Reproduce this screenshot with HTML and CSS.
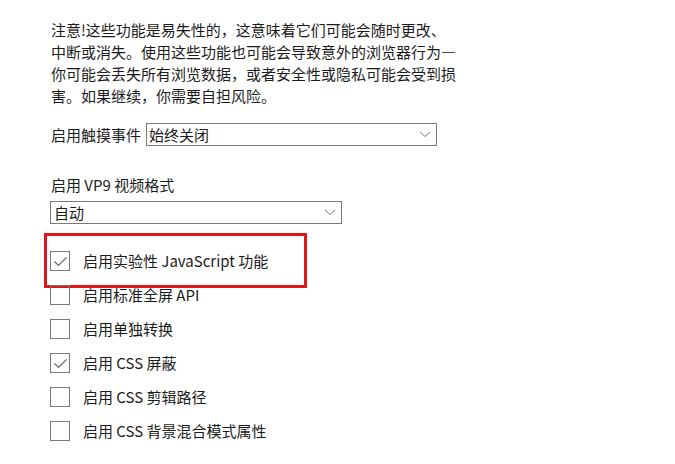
FILE: index.html
```html
<!DOCTYPE html>
<html lang="zh-CN">
<head>
<meta charset="utf-8">
<link rel="stylesheet" href="styles.css">
</head>
<body>
<div class="page">
  <p class="warning">注意!这些功能是易失性的，这意味着它们可能会随时更改、<br>中断或消失。使用这些功能也可能会导致意外的浏览器行为—<br>你可能会丢失所有浏览数据，或者安全性或隐私可能会受到损<br>害。如果继续，你需要自担风险。</p>

  <div class="inline-field">
    <span class="label">启用触摸事件</span>
    <div class="select select-wide">
      <span>始终关闭</span>
      <svg class="chev" width="12" height="7" viewBox="0 0 12 7"><path d="M1 1 L6 5.5 L11 1" fill="none" stroke="#777" stroke-width="1"/></svg>
    </div>
  </div>

  <div class="stack-field">
    <div class="label">启用 VP9 视频格式</div>
    <div class="select select-mid">
      <span>自动</span>
      <svg class="chev" width="12" height="7" viewBox="0 0 12 7"><path d="M1 1 L6 5.5 L11 1" fill="none" stroke="#777" stroke-width="1"/></svg>
    </div>
  </div>

  <div class="checks">
    <div class="check-row">
      <span class="box"><svg width="18" height="18" viewBox="0 0 18 18"><path d="M3.5 9.5 L7.5 13.5 L15.5 5.5" fill="none" stroke="#6b6b6b" stroke-width="1.2"/></svg></span>
      <span class="check-label">启用实验性 JavaScript 功能</span>
      <div class="highlight"></div>
    </div>
    <div class="check-row">
      <span class="box"></span>
      <span class="check-label">启用标准全屏 API</span>
    </div>
    <div class="check-row">
      <span class="box"></span>
      <span class="check-label">启用单独转换</span>
    </div>
    <div class="check-row">
      <span class="box"><svg width="18" height="18" viewBox="0 0 18 18"><path d="M3.5 9.5 L7.5 13.5 L15.5 5.5" fill="none" stroke="#6b6b6b" stroke-width="1.2"/></svg></span>
      <span class="check-label">启用 CSS 屏蔽</span>
    </div>
    <div class="check-row">
      <span class="box"></span>
      <span class="check-label">启用 CSS 剪辑路径</span>
    </div>
    <div class="check-row">
      <span class="box"></span>
      <span class="check-label">启用 CSS 背景混合模式属性</span>
    </div>
  </div>
</div>
</body>
</html>
```

FILE: styles.css
```css
html, body {
  margin: 0;
  padding: 0;
  background: #ffffff;
}

body {
  font-family: "Noto Sans CJK SC", "Noto Sans", sans-serif;
  font-size: 15px;
  color: #1b1b1b;
}

.page {
  padding: 19px 0 0 51px;
  display: flex;
  flex-direction: column;
}

.warning {
  margin: 0;
  line-height: 22px;
  white-space: nowrap;
}

.inline-field {
  margin-top: 16px;
  display: flex;
  align-items: center;
  gap: 5px;
  height: 23px;
}

.label {
  line-height: 22px;
}

.select {
  box-sizing: border-box;
  height: 23px;
  border: 1px solid #7a7a7a;
  display: flex;
  align-items: center;
  justify-content: space-between;
  padding: 0 5px 0 2px;
  line-height: 20px;
  background: #fff;
}

.select-wide {
  width: 291px;
}

.stack-field {
  margin-top: 28px;
  display: flex;
  flex-direction: column;
  gap: 5px;
}

.select-mid {
  width: 292px;
  margin-left: -1px;
  padding-left: 3px;
}

.chev {
  display: block;
}

.checks {
  margin-top: 27px;
  display: flex;
  flex-direction: column;
  gap: 14px;
}

.check-row {
  position: relative;
  display: flex;
  align-items: center;
  gap: 13px;
  height: 20px;
  margin-left: -1px;
}

.box {
  box-sizing: border-box;
  width: 20px;
  height: 20px;
  border: 1px solid #7a7a7a;
  display: flex;
  align-items: center;
  justify-content: center;
  flex: none;
}

.box svg {
  display: block;
}

.check-label {
  line-height: 20px;
}

.highlight {
  position: absolute;
  left: -6px;
  top: -18px;
  width: 263px;
  height: 55px;
  box-sizing: border-box;
  border: 3px solid #e0161b;
  pointer-events: none;
}
```
